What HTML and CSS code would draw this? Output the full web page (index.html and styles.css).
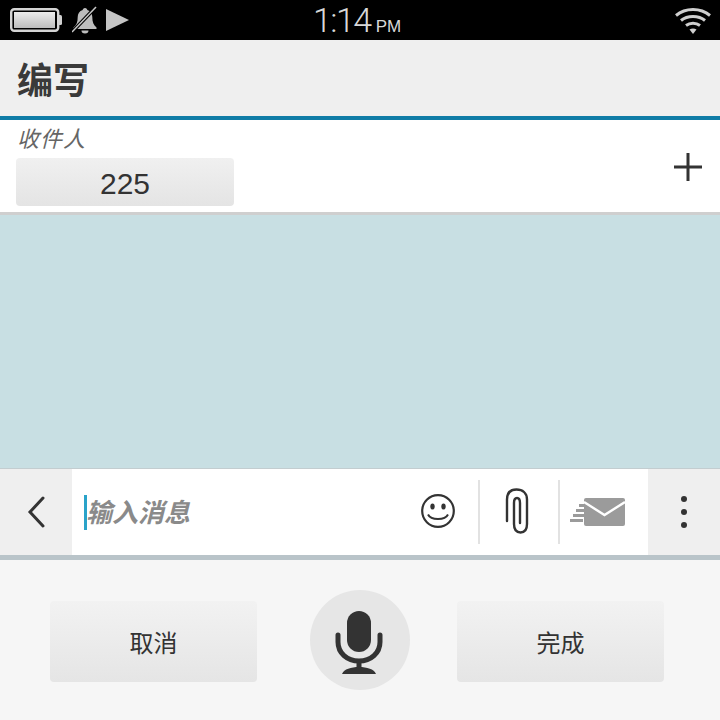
FILE: index.html
```html
<!DOCTYPE html>
<html lang="zh">
<head>
	<meta charset="UTF-8">
	<meta name="viewport" content="width=device-width, initial-scale=1.0">
	<title>编写</title>
	<link rel="stylesheet" href="styles.css">
</head>
<body>
	<div class="status">
		<div class="status-left">
			<svg class="battery" width="52" height="24" viewBox="0 0 52 24">
				<defs>
					<linearGradient id="batt" x1="0" y1="0" x2="0" y2="1">
						<stop offset="0" stop-color="#ececec"/>
						<stop offset="1" stop-color="#bdbdbd"/>
					</linearGradient>
				</defs>
				<rect x="1.2" y="1.2" width="47" height="21.6" rx="3" fill="none" stroke="#d4d4d4" stroke-width="2.4"/>
				<rect x="4" y="4" width="41" height="16" fill="url(#batt)"/>
				<path d="M49 7h1.5a1.5 1.5 0 0 1 1.5 1.5v7a1.5 1.5 0 0 1-1.5 1.5H49z" fill="#d0d0d0"/>
			</svg>
			<svg class="bell" width="26" height="28" viewBox="0 0 26 28">
				<path d="M13 2c1.5 0 2.2 1 2.3 2 3.400 1 5 3.700 5 7 0 5 1.200 8 4.200 10.500v1.500H1.500v-1.500C4.500 19 5.700 16 5.700 11c0-3.300 1.600-6 5-7C10.800 3 11.500 2 13 2z" fill="#bdbdbd"/>
				<path d="M9.500 24.500h7a3.500 3 0 0 1-7 0z" fill="#bdbdbd"/>
				<path d="M0.500 25.500 L23.500 1.500" stroke="#000" stroke-width="3.600"/>
				<path d="M0 26 L24 1" stroke="#c8c8c8" stroke-width="1.500"/>
			</svg>
			<svg class="play" width="24" height="22" viewBox="0 0 24 22">
				<path d="M0 0 L23 11 L0 22z" fill="#c4c4c4"/>
			</svg>
		</div>
		<div class="clock"><span class="time">1:14</span><span class="ampm">PM</span></div>
		<svg class="wifi" width="38" height="28" viewBox="0 0 38 28">
			<g fill="none" stroke="#cfcfcf" stroke-width="3">
				<path d="M2 9.500C11.500 1.500 26.500 1.500 36 9.500"/>
				<path d="M7 14.500C13.500 9 24.500 9 31 14.500"/>
				<path d="M12 19.500C16 16.500 22 16.500 26 19.500"/>
			</g>
			<path d="M15.500 23.500C17.500 22 20.500 22 22.500 23.500L19 28z" fill="#cfcfcf"/>
		</svg>
	</div>

	<div class="title-bar">
		<h1>编写</h1>
	</div>

	<div class="to-row">
		<div class="to-left">
			<div class="to-label">收件人</div>
			<div class="chip">225</div>
		</div>
		<svg class="plus" width="28" height="28" viewBox="0 0 28 28">
			<path d="M0 14H28M14 0V28" stroke="#333" stroke-width="3"/>
		</svg>
	</div>

	<div class="messages"></div>

	<div class="composer">
		<div class="side-btn">
			<svg width="18" height="32" viewBox="0 0 18 32">
				<path d="M16 2 L3 16 L16 30" fill="none" stroke="#333" stroke-width="3" stroke-linecap="round"/>
			</svg>
		</div>
		<div class="input-area">
			<div class="message-input">
				<span class="cursor"></span>
				<span class="placeholder">输入消息</span>
			</div>
			<div class="icon-cell smile-cell">
				<svg width="36" height="36" viewBox="0 0 36 36">
					<circle cx="18" cy="18" r="15.800" fill="none" stroke="#333" stroke-width="2.200"/>
					<ellipse cx="12.500" cy="13.500" rx="2.200" ry="3" fill="#333"/>
					<ellipse cx="23.500" cy="13.500" rx="2.200" ry="3" fill="#333"/>
					<path d="M8 21.500C11 27.500 25 27.500 28 21.500" fill="none" stroke="#333" stroke-width="2"/>
				</svg>
			</div>
			<div class="icon-cell clip-cell">
				<svg width="24" height="46" viewBox="0 0 24 46">
					<path d="M2 33V11.500C2 5 5.500 1.500 11.500 1.500S22 5 22 11.500V36C22 41.500 19.500 44.500 15.500 44.500S9 41.500 9 36V15C9 11.500 10 10 12 10S15 11.500 15 15V35" fill="none" stroke="#333" stroke-width="2.400" stroke-linecap="round"/>
				</svg>
			</div>
			<div class="icon-cell send-cell">
				<svg width="55" height="30" viewBox="0 0 55 30">
					<path d="M9 7h5v3H9zM6 12h8v3H6zM3 17h11v3H3zM0 22h13v3H0z" fill="#9b9b9b"/>
					<rect x="14" y="1" width="41" height="28" rx="2" fill="#9b9b9b"/>
					<path d="M14 5 L34.500 18 L55 5" fill="none" stroke="#fff" stroke-width="2.400"/>
				</svg>
			</div>
		</div>
		<div class="side-btn more">
			<span class="dot"></span>
			<span class="dot"></span>
			<span class="dot"></span>
		</div>
	</div>

	<div class="keyboard">
		<button class="key">取消</button>
		<div class="mic">
			<svg width="48" height="64" viewBox="0 0 48 64">
				<rect x="12" y="0" width="24" height="41" rx="12" fill="#333"/>
				<path d="M3 24V31C3 42 12 50 24 50S45 42 45 31V24" fill="none" stroke="#333" stroke-width="5" stroke-linecap="round"/>
				<path d="M21.500 50h5v8h-5z" fill="#333"/>
				<path d="M7 63C9 58 16 56 24 56S39 58 41 63z" fill="#333"/>
			</svg>
		</div>
		<button class="key">完成</button>
	</div>
</body>
</html>
```

FILE: styles.css
```css
* {
	margin: 0;
	padding: 0;
	box-sizing: border-box;
}
body {
	width: 720px;
	height: 720px;
	overflow: hidden;
	display: flex;
	flex-direction: column;
	font-family: "Liberation Sans", "Noto Sans CJK SC", sans-serif;
	background: #f6f6f6;
	color: #333;
}

.status {
	height: 40px;
	background: #000;
	display: flex;
	align-items: center;
	padding: 0 10px;
	position: relative;
}
.status-left {
	display: flex;
	align-items: center;
}
.battery {
	margin-right: 10px;
}
.bell {
	margin-right: 8px;
}
.clock {
	position: absolute;
	left: 313px;
	bottom: 6px;
	display: flex;
	align-items: baseline;
	color: #d8d8d8;
}
.time {
	font-family: Roboto, sans-serif;
	font-weight: 300;
	font-size: 34px;
	line-height: 24px;
	letter-spacing: -1.500px;
}
.ampm {
	font-size: 17px;
	line-height: 14px;
	margin-left: 5px;
}
.wifi {
	margin-left: auto;
	margin-right: -2px;
}

.title-bar {
	height: 80px;
	background: #efefef;
	border-bottom: 4px solid #0f7ca6;
	display: flex;
	align-items: center;
	padding-left: 17px;
}
.title-bar h1 {
	font-size: 36px;
	font-weight: 700;
	color: #3a3a3a;
}

.to-row {
	height: 95px;
	background: #fff;
	border-bottom: 3px solid #cfcfcf;
	display: flex;
	align-items: flex-start;
	justify-content: space-between;
	padding: 6px 18px 0 16px;
}
.to-label {
	font-size: 22px;
	font-style: italic;
	line-height: 28px;
	letter-spacing: 1px;
	color: #666;
	padding-left: 1px;
	margin-bottom: 4px;
}
.chip {
	width: 218px;
	height: 48px;
	border-radius: 4px;
	background: linear-gradient(#f0f0f0, #e4e4e4);
	text-align: center;
	font-size: 30px;
	line-height: 52px;
	color: #333;
}
.plus {
	margin-top: 27px;
}

.messages {
	height: 253px;
	background: #c8dfe3;
}

.composer {
	height: 92px;
	display: flex;
	background: #efefef;
	border-top: 1px solid #c3cdd0;
	border-bottom: 5px solid #b9c4c9;
}
.side-btn {
	width: 72px;
	display: flex;
	align-items: center;
	justify-content: center;
}
.more {
	flex-direction: column;
	gap: 7px;
}
.dot {
	width: 6px;
	height: 6px;
	border-radius: 50%;
	background: #333;
}
.input-area {
	flex: 1;
	background: #fff;
	display: flex;
	align-items: center;
}
.message-input {
	flex: 1;
	display: flex;
	align-items: center;
	padding-left: 12px;
}
.cursor {
	width: 3px;
	height: 35px;
	background: #2aa3c9;
}
.placeholder {
	font-size: 26px;
	font-style: italic;
	font-weight: 700;
	color: #8a8a8a;
	margin-left: -1px;
	margin-bottom: 3px;
}
.icon-cell {
	height: 64px;
	display: flex;
	align-items: center;
	justify-content: center;
}
.smile-cell {
	width: 76px;
	padding-right: 5px;
	padding-bottom: 2px;
}
.clip-cell {
	width: 82px;
	border-left: 2px solid #e2e2e2;
	border-right: 2px solid #e2e2e2;
	padding-right: 4px;
	padding-bottom: 3px;
}
.send-cell {
	width: 88px;
	justify-content: flex-start;
	padding-left: 10px;
}

.keyboard {
	flex: 1;
	display: flex;
	align-items: center;
	justify-content: space-between;
	padding: 0 56px 0 50px;
	background: #f6f6f6;
}
.key {
	width: 207px;
	height: 81px;
	margin-top: 2px;
	border: none;
	border-radius: 4px;
	background: linear-gradient(#f2f2f2, #e5e5e5);
	font-family: inherit;
	font-size: 24px;
	color: #333;
}
.mic {
	width: 100px;
	height: 100px;
	margin-left: 6px;
	border-radius: 50%;
	background: #e6e6e6;
	display: flex;
	align-items: center;
	justify-content: center;
}
.mic svg {
	margin-right: 2px;
	margin-top: 6px;
}
```
